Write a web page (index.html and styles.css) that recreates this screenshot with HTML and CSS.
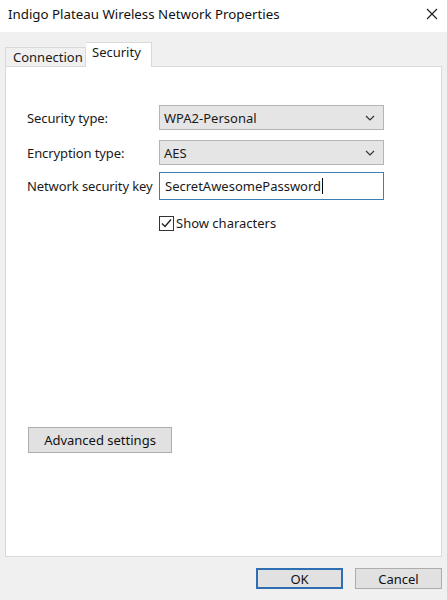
FILE: index.html
```html
<!DOCTYPE html>
<html>
<head>
<meta charset="utf-8">
<link rel="stylesheet" href="styles.css">
</head>
<body>
<div class="window">
  <div class="titlebar">
    <span class="title">Indigo Plateau Wireless Network Properties</span>
    <svg class="close" width="12" height="12" viewBox="0 0 12 12"><path d="M1 1 L11 11 M11 1 L1 11" stroke="#222" stroke-width="1.2" fill="none"/></svg>
  </div>
  <div class="body">
    <div class="tabs">
      <div class="tab">Connection</div>
      <div class="tab active">Security</div>
    </div>
    <div class="panel">
      <div class="form">
        <div class="row">
          <span class="label">Security type:</span>
          <div class="select"><span>WPA2-Personal</span><svg width="10" height="6" viewBox="0 0 10 6"><path d="M1 1 L5 5 L9 1" stroke="#333" stroke-width="1.2" fill="none"/></svg></div>
        </div>
        <div class="row row-enc">
          <span class="label">Encryption type:</span>
          <div class="select"><span>AES</span><svg width="10" height="6" viewBox="0 0 10 6"><path d="M1 1 L5 5 L9 1" stroke="#333" stroke-width="1.2" fill="none"/></svg></div>
        </div>
        <div class="row row-key">
          <span class="label">Network security key</span>
          <div class="input"><span>SecretAwesomePassword</span><span class="caret"></span></div>
        </div>
        <div class="row check-row">
          <span class="label"></span>
          <div class="check">
            <span class="box"><svg width="13" height="13" viewBox="0 0 13 13"><path d="M2 6.5 L5 9.5 L11 2.5" stroke="#222" stroke-width="1.4" fill="none"/></svg></span>
            <span>Show characters</span>
          </div>
        </div>
      </div>
      <div class="adv"><button class="btn adv-btn">Advanced settings</button></div>
    </div>
    <div class="footer">
      <button class="btn ok">OK</button>
      <button class="btn">Cancel</button>
    </div>
  </div>
</div>
</body>
</html>
```
FILE: styles.css
```css
* { box-sizing: border-box; }
html, body { margin: 0; padding: 0; }
body {
  width: 447px;
  height: 600px;
  overflow: hidden;
  font-family: "Noto Sans", "Open Sans", sans-serif;
  font-size: 13px;
  color: #1a1a1a;
  background: #f0f0f0;
}
.window { display: flex; flex-direction: column; height: 600px; }
.titlebar {
  height: 32px;
  background: #fff;
  display: flex;
  align-items: center;
  justify-content: space-between;
  padding: 0 9px 4px 8px;
}
.title { font-size: 13.3px; color: #111; }
.body { flex: 1; display: flex; flex-direction: column; padding: 10px 5px 0 5px; background: #f0f0f0; }
.tabs { display: flex; align-items: flex-end; height: 24px; position: relative; z-index: 1; }
.tab {
  height: 19px;
  padding: 0 7px;
  border: 1px solid #d9d9d9;
  border-bottom: none;
  background: #f0f0f0;
  font-size: 13px;
  line-height: 18px;
  width: 81px;
}
.tab.active {
  height: 25px;
  background: #fff;
  width: 66px;
  border-left: none;
  margin-bottom: -1px;
  line-height: 19px;
  padding-left: 6px;
}
.panel {
  height: 491px;
  background: #fff;
  border: 1px solid #d9d9d9;
  display: flex;
  flex-direction: column;
  padding: 38px 0 0 21px;
}
.form { display: flex; flex-direction: column; }
.row { display: flex; align-items: center; }
.row-enc { margin-top: 10px; }
.row-key { margin-top: 7px; }
.label { width: 132px; font-size: 13px; letter-spacing: -0.1px; }
.select {
  width: 225px;
  height: 25px;
  background: #e5e5e5;
  border: 1px solid #b4b4b4;
  display: flex;
  align-items: center;
  justify-content: space-between;
  padding: 0 8px 0 4px;
}
.input {
  width: 225px;
  height: 28px;
  border: 1px solid #3c7fb1;
  display: flex;
  align-items: center;
  padding: 0 5px;
}
.caret { width: 1px; height: 16px; background: #000; margin-left: 1px; }
.check-row { margin-top: 14px; }
.check { display: flex; align-items: center; gap: 2px; }
.box {
  width: 15px;
  height: 15px;
  border: 1px solid #333;
  display: flex;
  align-items: center;
  justify-content: center;
  background: #fff;
}
.adv { margin-top: 195px; }
.btn {
  font-family: inherit;
  font-size: 13px;
  color: #111;
  background: #e1e1e1;
  border: 1px solid #adadad;
  height: 21px;
  padding: 0;
}
.adv-btn { width: 144px; height: 26px; margin-left: 1px; }
.footer {
  display: flex;
  justify-content: flex-end;
  gap: 12px;
  padding: 11px 0 0 0;
}
.footer .btn { width: 87px; }
.ok { border: 2px solid #2e6fb4; }
```
